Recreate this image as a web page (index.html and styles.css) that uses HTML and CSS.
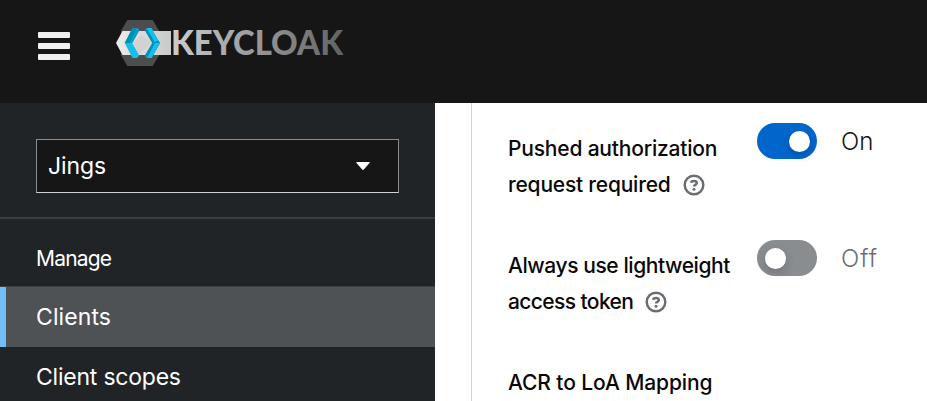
FILE: index.html
```html
<!DOCTYPE html>
<html lang="en">
<head>
<meta charset="utf-8">
<title>Keycloak</title>
<link rel="stylesheet" href="styles.css">
</head>
<body>
<header class="masthead">
  <button class="menu" aria-label="Menu"><span></span><span></span><span></span></button>
  <svg class="logo" width="230" height="50" viewBox="0 0 230 50">
    <defs>
      <linearGradient id="band" x1="0" x2="1"><stop offset="0" stop-color="#ececec"/><stop offset="1" stop-color="#c9c9c9"/></linearGradient>
      <linearGradient id="word" gradientUnits="userSpaceOnUse" x1="57" y1="0" x2="228" y2="20"><stop offset="0" stop-color="#cecece"/><stop offset=".5" stop-color="#999"/><stop offset="1" stop-color="#626262"/></linearGradient>
    </defs>
    <path fill="#4d4d4d" d="M12.300 2h25.400L44.500 13.500v23L37.700 48H12.300L6 37V13z"/>
    <path fill="url(#band)" d="M7.500 13H56v24H7.500L1 25z"/>
    <path fill="#d2d2d2" d="M18 25l8-8 11 8-13 11z"/>
    <path fill="#15bfe9" d="M17.500 10H22.300L24.300 12.500 17.300 25 24.300 37.500 22 40H17.500L9.700 25z"/>
    <path fill="#0091b6" d="M17.500 10H22.300L15 25H9.700z"/>
    <path fill="#0a9fc6" d="M22.300 10L24.300 12.500 17.300 25H14.500z"/>
    <path fill="#15bfe9" d="M31.700 10H36.500L45 25 36.500 40H31.700L30 37.500 37.300 25 30 12.500z"/>
    <path fill="#0091b6" d="M37.300 25L43.500 22.500 45 25 36.500 40H31.700L30 37.500z"/>
    <path fill="#15bfe9" d="M40 25H45L36.500 40H32z"/>
    <path fill="#0091b6" d="M30 12.500L31.700 10 40 25H37.300z"/>
    <text class="wordmark" x="56" y="37" textLength="172" lengthAdjust="spacingAndGlyphs">KEYCLOAK</text>
  </svg>
</header>
<div class="body">
  <nav class="sidebar">
    <div class="realm">
      <button class="select"><span class="jings">Jings</span><svg width="14" height="8" viewBox="0 0 14 8"><path fill="#fff" d="M.7 0h12.600q.7.300.2 1L7.800 7.600q-.8.700-1.600 0L.5 1Q0 .300.700 0z"/></svg></button>
    </div>
    <div class="section"><span class="manage">Manage</span></div>
    <a class="item current"><span class="clients">Clients</span></a>
    <a class="item"><span class="scopes">Client scopes</span></a>
  </nav>
  <main class="content">
    <div class="form">
      <div class="row">
        <div class="label"><span class="l1">Pushed authorization</span><br><span class="l2">request required</span><svg class="help" width="22" height="22" viewBox="0 0 22 22"><circle cx="11" cy="11" r="9.300"/><path d="M7.800 8.700C9 6.200 14.100 6.300 13.800 9.200 13.600 11 11 10.700 11 12.600"/><circle class="dot" cx="11" cy="15.300" r="1.500"/></svg></div>
        <div class="switch on"><span class="track"></span><span class="state">On</span></div>
      </div>
      <div class="row">
        <div class="label"><span class="l3">Always use lightweight</span><br><span class="l4">access token</span><svg class="help" width="22" height="22" viewBox="0 0 22 22"><circle cx="11" cy="11" r="9.300"/><path d="M7.800 8.700C9 6.200 14.100 6.300 13.800 9.200 13.600 11 11 10.700 11 12.600"/><circle class="dot" cx="11" cy="15.300" r="1.500"/></svg></div>
        <div class="switch"><span class="track"></span><span class="state off-text">Off</span></div>
      </div>
      <div class="row last"><div class="label"><span class="l5">ACR to LoA Mapping</span></div></div>
    </div>
  </main>
</div>
</body>
</html>
```
FILE: styles.css
```css
* { box-sizing: border-box; }
body { margin: 0; height: 401px; overflow: hidden; font-family: Inter, "Liberation Sans", sans-serif; background: #fff; }
.masthead { height: 103px; background: #161616; display: flex; align-items: flex-start; padding: 18px 0 0 38px; }
.menu { width: 32px; padding: 0; margin: 14px 45px 0 0; border: 0; background: none; display: flex; flex-direction: column; gap: 5px; }
.menu span { width: 32px; height: 6px; background: #f0f0f0; border-radius: 1px; }
.logo { display: block; }
.wordmark { font: 900 33.500px Lato, sans-serif; fill: url(#word); }
.body { display: flex; height: 298px; }
.sidebar { width: 435px; background: #212427; color: #fff; display: flex; flex-direction: column; }
.realm { height: 116px; flex: none; padding: 36px 36px 0; border-bottom: 2px solid #3c3f42; }
.select { width: 363px; height: 54px; background: #161616; border: 1px solid #8a8d90; border-bottom-color: #d2d2d2; color: #fff; font: 400 23px/52px Inter, sans-serif; display: flex; align-items: center; justify-content: space-between; padding: 0 28px 0 11px; }
.section { height: 68px; flex: none; border-bottom: 1px solid #3c3f42; padding: 5px 36px 0; font-size: 21px; line-height: 62px; padding-top: 9px; }
.item { display: block; height: 54px; padding-left: 36px; font-size: 23px; line-height: 60px; overflow: hidden; }
.current { flex: none; height: 60px; background: #4f5255; border-left: 6px solid #73bcf7; padding-left: 30px; }
.content { flex: 1; padding-left: 36px; }
.form { height: 298px; border-left: 1px solid #d2d2d2; padding: 20px 0 0 36px; }
.row { height: 117px; display: flex; align-items: flex-start; }
.last { height: 44px; }
.label { width: 249px; padding-top: 8px; font-size: 21px; line-height: 36px; font-weight: 500; color: #080808; white-space: nowrap; }
.help { margin-left: 12px; vertical-align: -4px; fill: none; stroke: #6a6e73; stroke-width: 2.500; }
.help .dot { fill: #6a6e73; stroke: none; }
.switch { display: flex; align-items: center; gap: 24px; height: 36px; }
.track { width: 60px; height: 36px; border-radius: 18px; background: #8a8d90; padding: 8px 7px; display: flex; }
.track::before { content: ""; width: 21px; height: 21px; border-radius: 50%; background: #fff; box-shadow: 0 4px 10px rgba(0,0,0,.18); }
.switch:not(.on) .track { padding-left: 8px; }
.on .track { background: #06c; justify-content: flex-end; }
.state { font-size: 24px; font-weight: 300; line-height: 36px; color: #6a6e73; padding-top: 1px; }
.on .state { color: #151515; }
.off-text { letter-spacing: 1px; }
.jings { letter-spacing: -.1px; }
.manage { letter-spacing: -.8px; }
.clients { letter-spacing: .1px; }
.scopes { letter-spacing: -.22px; }
.l1 { letter-spacing: -.19px; }
.l2 { letter-spacing: -.22px; }
.l3 { letter-spacing: -.42px; }
.l4 { letter-spacing: -.6px; }
.l5 { letter-spacing: -.1px; }
```
